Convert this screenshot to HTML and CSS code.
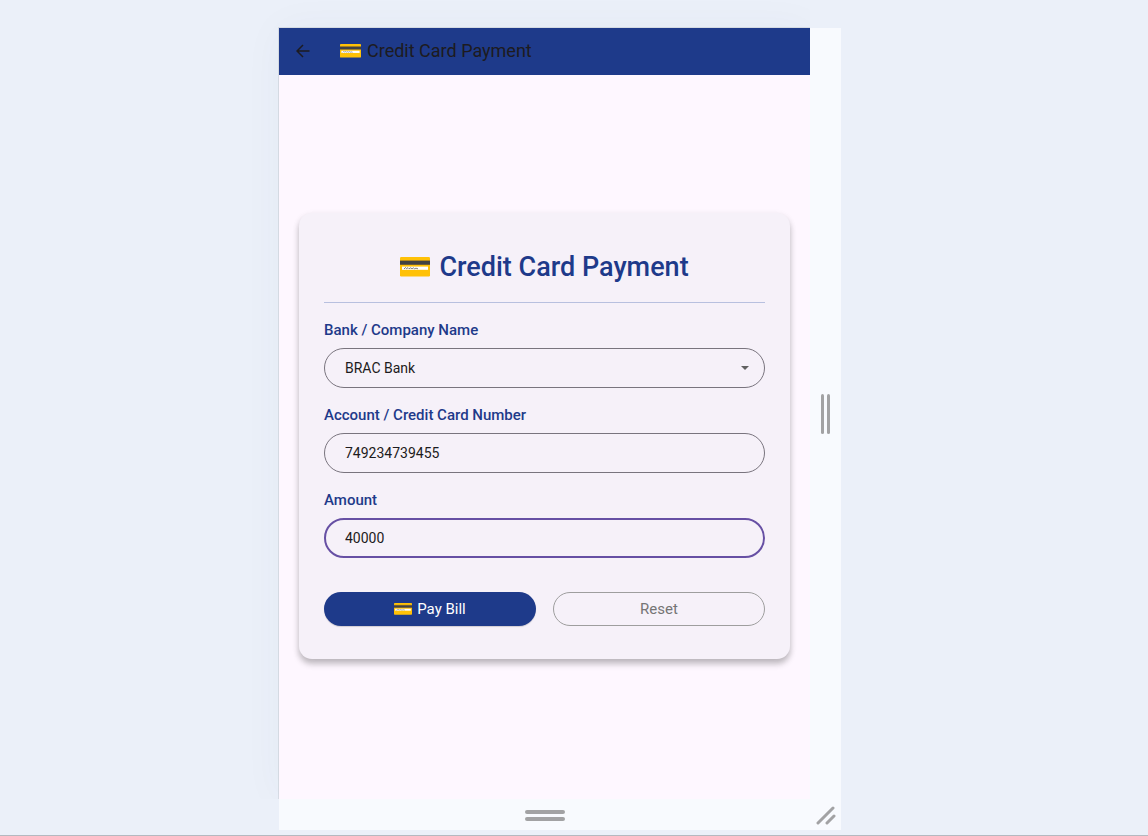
FILE: index.html
```
<!DOCTYPE html>
<html lang="en">
<head>
<meta charset="utf-8">
<meta name="viewport" content="width=device-width, initial-scale=1">
<title>Credit Card Payment</title>
<link rel="stylesheet" href="styles.css">
</head>
<body>
<svg class="symbols" aria-hidden="true">
  <symbol id="card" viewBox="0 0 30 20">
    <rect x="0" y="0" width="30" height="19.4" rx="1.2" fill="#ffc107"/>
    <rect x="0" y="3" width="30" height="5" fill="#b58a1c"/>
    <rect x="0" y="4" width="30" height="3.6" fill="#424242"/>
    <rect x="2" y="9.6" width="26" height="3.2" fill="#fff"/>
    <path d="M4 12l1.5-1.5 1 1.2 1.5-1 1 1 1.5-.8 1.5.8 1.5-.8 1 .8 1.5-.5 2 .6" fill="none" stroke="#616161" stroke-width=".8"/>
  </symbol>
</svg>
<div class="stage">
  <div class="device">
    <main class="screen">
      <header class="appbar">
        <button class="back" type="button" aria-label="Back">
          <svg viewBox="0 0 14 14" width="14" height="14"><path d="M13.5 7H1.2M7 1L1 7l6 6" fill="none" stroke="#1d1b20" stroke-width="1.5"/></svg>
        </button>
        <h1 class="appbar-title"><svg class="icon-bar" aria-hidden="true"><use href="#card"/></svg>Credit Card Payment</h1>
      </header>
      <div class="content">
        <form class="card">
          <h2 class="title"><svg class="icon-title" aria-hidden="true"><use href="#card"/></svg>Credit Card Payment</h2>
          <hr class="divider">
          <div class="fields">
            <div class="field">
              <label for="bank">Bank / Company Name</label>
              <div class="select-wrap">
                <select id="bank" class="control"><option>BRAC Bank</option></select>
                <svg class="caret" viewBox="0 0 8 4" aria-hidden="true"><path d="M0 0h8L4 4z" fill="#616161"/></svg>
              </div>
            </div>
            <div class="field">
              <label for="account">Account / Credit Card Number</label>
              <input id="account" class="control" type="text" inputmode="numeric" value="749234739455">
            </div>
            <div class="field">
              <label for="amount">Amount</label>
              <input id="amount" class="control control-active" type="text" inputmode="numeric" value="40000">
            </div>
          </div>
          <div class="actions">
            <button class="btn btn-pay" type="button"><svg class="icon-btn" aria-hidden="true"><use href="#card"/></svg>Pay Bill</button>
            <button class="btn btn-reset" type="reset">Reset</button>
          </div>
        </form>
      </div>
    </main>
    <div class="handle handle-right"><i></i><i></i></div>
    <div class="handle handle-bottom"><i></i><i></i></div>
    <div class="handle handle-corner">
      <svg viewBox="0 0 20 20" width="20" height="20"><path d="M2 18L17 3M11 18l7-7" fill="none" stroke="#a2a2a4" stroke-width="3" stroke-linecap="round"/></svg>
    </div>
  </div>
</div>
</body>
</html>
```

FILE: styles.css
```
* { box-sizing: border-box; }

body {
  margin: 0;
  background: #ebf0f9;
  color: #1d1b20;
  font-family: Roboto, "Liberation Sans", sans-serif;
}

.symbols { position: absolute; width: 0; height: 0; }

.stage {
  display: flex;
  justify-content: center;
  min-height: 100vh;
  padding: 28px 28px 5px 0;
  border-bottom: 1px solid #b4b9c0;
}

.device {
  display: grid;
  grid-template-columns: 1fr 31px;
  grid-template-rows: 1fr 31px;
  width: 100%;
  max-width: 562px;
  background: #f8fafe;
}

.screen {
  display: flex;
  flex-direction: column;
  background: #fef7ff;
  box-shadow: 0 0 0 1px rgba(0, 0, 0, 0.08), 0 0 40px rgba(60, 80, 110, 0.04);
  clip-path: inset(-40px 0 0 -40px);
}

.appbar {
  display: flex;
  align-items: center;
  gap: 24px;
  height: 47px;
  padding: 0 10px 1px;
  background: #1e3a8a;
}

.back {
  display: grid;
  place-items: center;
  width: 27px;
  height: 27px;
  padding: 0;
  border: 0;
  background: none;
}

.appbar-title {
  display: flex;
  align-items: center;
  gap: 6px;
  margin: 0;
  font-size: 18px;
  font-weight: 400;
  line-height: 24px;
}

.icon-bar { width: 21px; height: 14px; }
.icon-title { width: 30px; height: 20px; }
.icon-btn { width: 18px; height: 12px; }

.content {
  display: grid;
  flex: 1;
  align-items: center;
  padding: 20px 20px 22px;
}

.card {
  padding: 37px 25px 33px;
  border-radius: 13px;
  background: #f6f1f9;
  box-shadow: 0 5px 6px rgba(0, 0, 0, 0.22), 0 2px 7px rgba(0, 0, 0, 0.08);
}

.title {
  display: flex;
  align-items: center;
  justify-content: center;
  gap: 9px;
  margin: 0;
  color: #1e3a8a;
  font-size: 27px;
  font-weight: 500;
  line-height: 34px;
}

.divider {
  margin: 18px 0 17px;
  border: 0;
  border-top: 1px solid #b8c0df;
}

.fields { display: grid; gap: 17px; }
.field { display: grid; gap: 8px; }

.field label {
  color: #1e3a8a;
  font-size: 15px;
  font-weight: 500;
  line-height: 20px;
}

.control {
  width: 100%;
  height: 40px;
  padding: 0 20px;
  border: 1px solid #79747e;
  border-radius: 20px;
  outline: 0;
  appearance: none;
  background: transparent;
  color: #1d1b20;
  font: 400 14px Roboto, "Liberation Sans", sans-serif;
}

.control-active {
  padding: 0 19px;
  border: 2px solid #6750a4;
}

.select-wrap { display: grid; align-items: center; }
.select-wrap > * { grid-area: 1 / 1; }

.caret {
  justify-self: end;
  width: 8px;
  height: 4px;
  margin-right: 16px;
  pointer-events: none;
}

.actions {
  display: grid;
  grid-template-columns: 1fr 1fr;
  gap: 17px;
  margin-top: 34px;
}

.btn {
  display: flex;
  align-items: center;
  justify-content: center;
  gap: 5px;
  height: 34px;
  padding: 0 16px;
  border: 1px solid #9e9e9e;
  border-radius: 17px;
  background: transparent;
  color: #757575;
  font: 400 15px Roboto, "Liberation Sans", sans-serif;
}

.btn-pay {
  border: 0;
  background: #1e3a8a;
  color: #fff;
  box-shadow: 0 1px 1px rgba(0, 0, 0, 0.15);
}

.handle {
  display: flex;
  align-items: center;
  justify-content: center;
  gap: 3px;
}

.handle i { border-radius: 2px; background: #a2a2a4; }
.handle-right i { width: 3px; height: 40px; }
.handle-bottom { flex-direction: column; padding-top: 2px; }
.handle-bottom i { width: 40px; height: 4px; }
```
